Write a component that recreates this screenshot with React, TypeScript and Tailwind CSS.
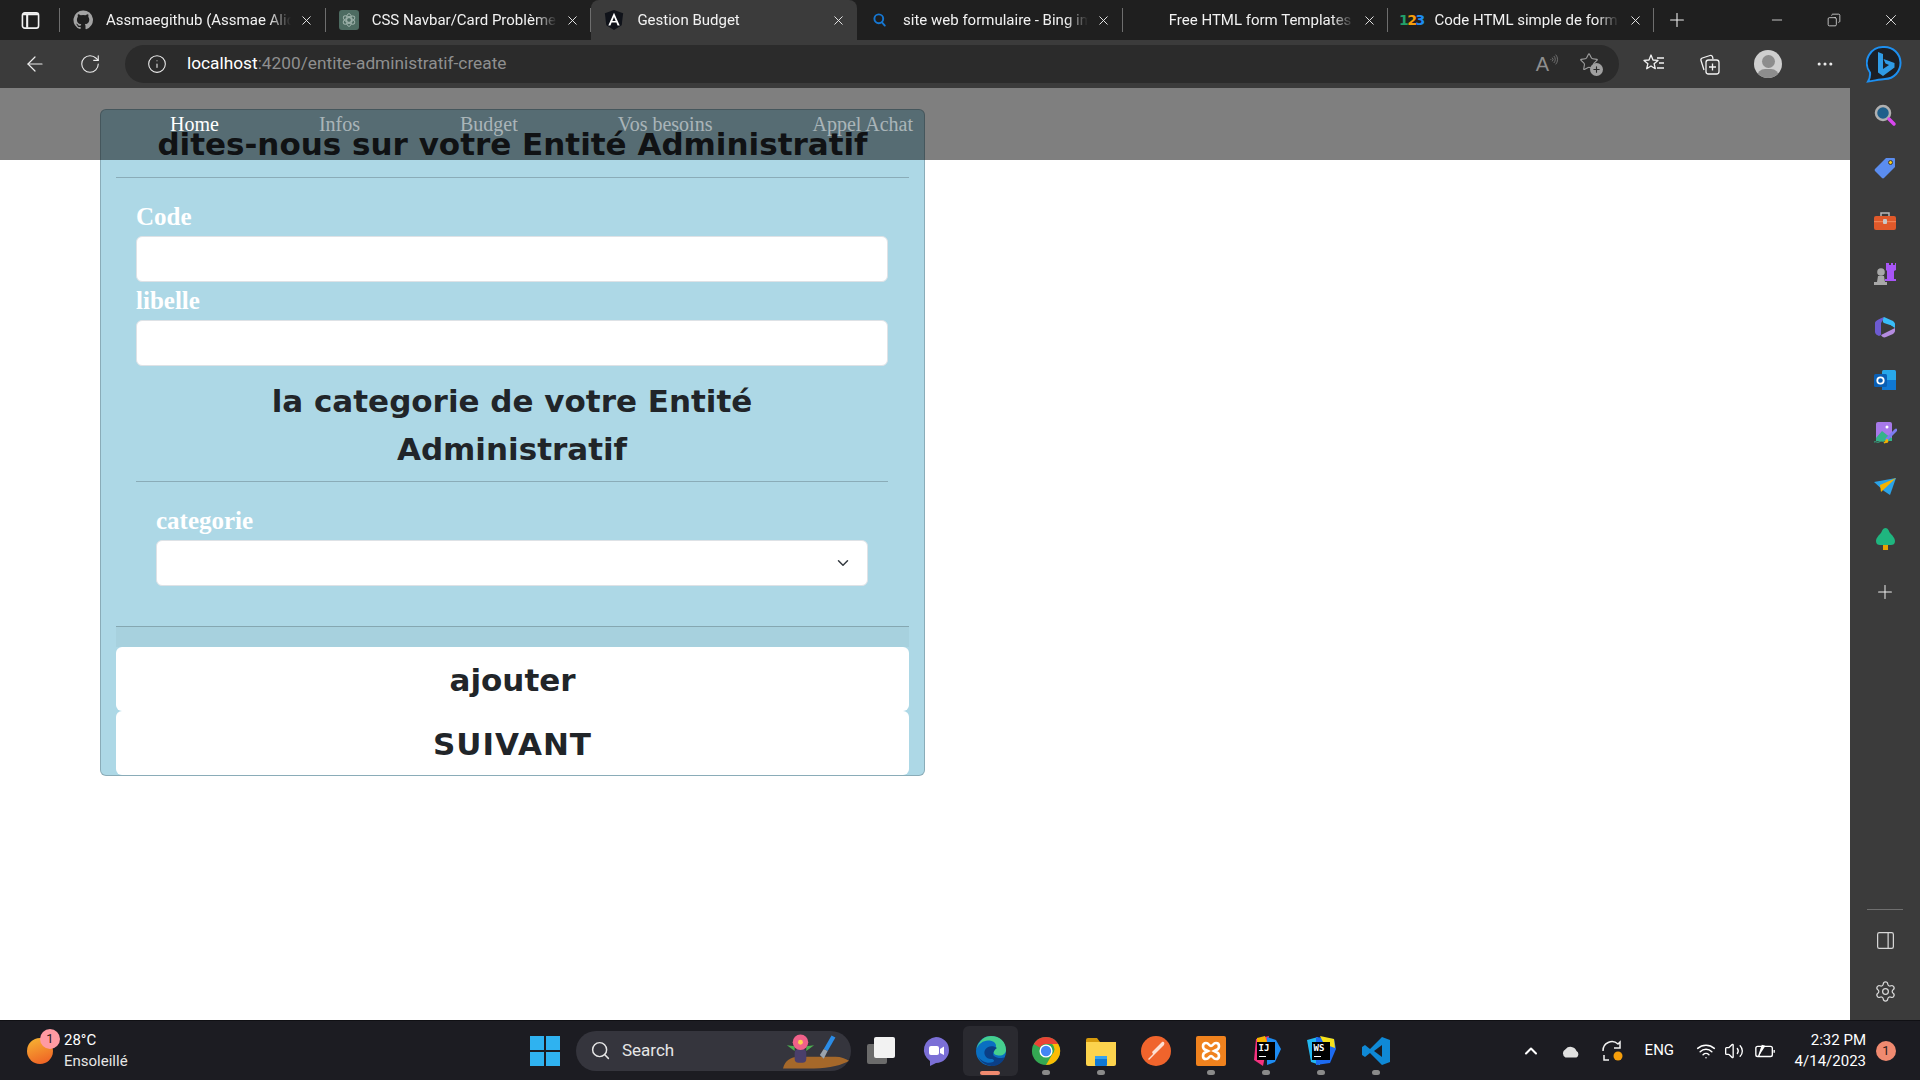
import { ArrowLeft, ChevronDown, ChevronUp, Copy, Info, MoreHorizontal, Minus, PanelRight, Plus, RotateCw, Search, Settings, Star, Volume2, Wifi, X } from "lucide-react";

const tabs = [
  { title: "Assmaegithub (Assmae Alidrissi)", icon: "github" },
  { title: "CSS Navbar/Card Problème", icon: "gpt" },
  { title: "Gestion Budget", icon: "angular", active: true },
  { title: "site web formulaire - Bing images", icon: "bing" },
  { title: "Free HTML form Templates Online", icon: "none" },
  { title: "Code HTML simple de formulaire", icon: "num" },
];

function TabIcon({ kind }: { kind: string }) {
  if (kind === "github") {
    return (
      <svg viewBox="0 0 24 24" className="h-5 w-5" fill="#a3a3a3">
        <path d="M12 .5a11.5 11.5 0 0 0-3.6 22.4c.6.1.8-.3.8-.6v-2c-3.2.7-3.9-1.5-3.9-1.5-.5-1.3-1.3-1.700-1.300-1.700-1-.7.1-.7.1-.7 1.200.1 1.800 1.200 1.800 1.200 1 1.800 2.700 1.300 3.400 1 .1-.8.400-1.300.700-1.600-2.600-.3-5.300-1.300-5.300-5.700 0-1.300.5-2.300 1.200-3.100-.1-.3-.5-1.500.1-3.100 0 0 1-.3 3.200 1.200a11 11 0 0 1 5.800 0c2.200-1.500 3.200-1.200 3.200-1.200.6 1.600.2 2.800.1 3.100.7.8 1.200 1.800 1.200 3.100 0 4.400-2.700 5.400-5.300 5.700.4.400.8 1.100.8 2.200v3.200c0 .3.2.7.8.6A11.500 11.500 0 0 0 12 .5z" />
      </svg>
    );
  }
  if (kind === "gpt") {
    return (
      <span className="flex h-5 w-5 items-center justify-center rounded-[3px] bg-[#4d6b61]">
        <svg viewBox="0 0 20 20" className="h-4 w-4" fill="none" stroke="#9fb3ab" strokeWidth="1.2">
          <circle cx="10" cy="10" r="3" />
          <ellipse cx="10" cy="10" rx="8" ry="3.500" transform="rotate(30 10 10)" />
          <ellipse cx="10" cy="10" rx="8" ry="3.500" transform="rotate(90 10 10)" />
          <ellipse cx="10" cy="10" rx="8" ry="3.500" transform="rotate(150 10 10)" />
        </svg>
      </span>
    );
  }
  if (kind === "angular") {
    return (
      <svg viewBox="0 0 24 24" className="h-[22px] w-[22px]">
        <path d="M12 1 2 4.600l1.600 13.200L12 23l8.400-5.200L22 4.600z" fill="#10131a" />
        <path d="M12 4 5.800 18h2.300l1.300-3.200h5.200l1.300 3.200h2.300L12 4zm1.800 9h-3.600L12 8.600z" fill="#fff" />
      </svg>
    );
  }
  if (kind === "bing") {
    return (
      <svg viewBox="0 0 20 20" className="h-[16px] w-[16px]" fill="none" stroke="#1677d2" strokeWidth="2.400" strokeLinecap="round">
        <circle cx="8.500" cy="8.500" r="5.500" />
        <path d="m12.500 13 3.500 4" />
      </svg>
    );
  }
  if (kind === "num") {
    return (
      <span className="font-['DejaVu_Sans',sans-serif] text-[14px] font-bold tracking-[-1.500px]">
        <span className="text-[#22a06b]">1</span>
        <span className="text-[#f59e0b]">2</span>
        <span className="text-[#1d8bf1]">3</span>
      </span>
    );
  }
  return null;
}

function BrowserTab({ title, icon, active, last }: { title: string; icon: string; active?: boolean; last?: boolean }) {
  return (
    <div className={`relative flex h-10 w-[265.7px] shrink-0 items-center ${active ? "rounded-t-lg bg-[#3b3b3b]" : "bg-[#1f1f1f]"}`}>
      <span className="flex w-[46px] shrink-0 justify-center">
        <TabIcon kind={icon} />
      </span>
      <span className="w-[185px] overflow-hidden whitespace-nowrap text-[15px] text-[#f2f2f2] [mask-image:linear-gradient(to_right,black_88%,transparent)]">
        {title}
      </span>
      <span className="flex flex-1 justify-center pr-[3px]">
        <X className="h-[15px] w-[15px] text-[#ededed]" strokeWidth={1.5} />
      </span>
      {!active && !last && <span className="absolute right-0 top-2 h-6 w-px bg-[#6e6e6e]" />}
      {last && <span className="absolute right-0 top-2 h-6 w-px bg-[#6e6e6e]" />}
    </div>
  );
}

function BrowserChrome() {
  return (
    <div className="h-[88px] shrink-0 bg-[#3b3b3b]">
      <div className="flex h-10 bg-[#1f1f1f]">
        <div className="relative flex w-[60px] shrink-0 items-center pl-[21px]">
          <svg viewBox="0 0 20 20" className="h-[19px] w-[19px]" fill="none" stroke="#f2f2f2" strokeWidth="1.700">
            <rect x="1.500" y="2" width="17" height="16" rx="2.500" />
            <path d="M2 3.500h16M6.500 3v14.500" strokeWidth="2.200" />
          </svg>
          <span className="absolute right-0 top-2 h-6 w-px bg-[#6e6e6e]" />
        </div>
        {tabs.map((t, i) => (
          <BrowserTab key={t.title} title={t.title} icon={t.icon} active={t.active} last={i === tabs.length - 1} />
        ))}
        <div className="flex w-[46px] items-center justify-center">
          <Plus className="h-[22px] w-[22px] text-[#ededed]" strokeWidth={1.2} />
        </div>
        <div className="ml-auto flex items-center">
          <span className="flex w-[57px] justify-center"><Minus className="h-4 w-4 text-[#ededed]" strokeWidth={1.2} /></span>
          <span className="flex w-[57px] justify-center"><Copy className="h-[14px] w-[14px] -scale-x-100 text-[#ededed]" strokeWidth={1.3} /></span>
          <span className="flex w-[58px] justify-center"><X className="h-[18px] w-[18px] text-[#ededed]" strokeWidth={1.2} /></span>
        </div>
      </div>

      <div className="flex h-12 items-center">
        <span className="flex w-[70px] shrink-0 justify-center"><ArrowLeft className="h-[24px] w-[24px] text-[#ececec]" strokeWidth={1.2} /></span>
        <span className="flex w-[40px] shrink-0 justify-center"><RotateCw className="h-[22px] w-[22px] text-[#ececec]" strokeWidth={1.2} /></span>
        <div className="ml-[15px] flex h-[38px] w-[1494px] shrink-0 items-center rounded-full bg-[#2b2b2b]">
          <span className="flex w-[62px] shrink-0 justify-center pl-[2px]"><Info className="h-[20px] w-[20px] text-[#ececec]" strokeWidth={1.3} /></span>
          <span className="text-[17.3px] text-[#8f8f8f]"><span className="text-white">localhost</span>:4200/entite-administratif-create</span>
          <div className="ml-auto flex items-center gap-[19px] pr-[16px]">
            <span className="flex items-start font-['Liberation_Sans',sans-serif] text-[20px] font-light leading-none text-[#8f8f8f]">A<Wifi className="h-[11px] w-[11px] rotate-90" strokeWidth={1.5} /></span>
            <span className="relative block h-6 w-6">
              <Star className="h-[20px] w-[20px] text-[#a0a0a0]" strokeWidth={1.3} />
              <span className="absolute bottom-0 right-0 flex h-[13px] w-[13px] items-center justify-center rounded-full bg-[#a0a0a0]"><Plus className="h-[9px] w-[9px] text-[#2b2b2b]" strokeWidth={3} /></span>
            </span>
          </div>
        </div>
        <span className="ml-[23px] block">
          <svg viewBox="0 0 24 24" className="h-[24px] w-[24px]" fill="none" stroke="#f2f2f2" strokeWidth="1.300" strokeLinejoin="round">
            <path d="m9 3 2 5 5 .4-3.900 3.300 1.200 5L9 14l-4.300 2.700 1.200-5L2 8.400 7 8z" />
            <path d="M15 6h7M17 11h5M15 16h7" />
          </svg>
        </span>
        <span className="ml-[32px] block">
          <svg viewBox="0 0 24 24" className="h-[24px] w-[24px]" fill="none" stroke="#f2f2f2" strokeWidth="1.300">
            <path d="M6 18 3 8.500a2 2 0 0 1 1.300-2.500L12 3.500a2 2 0 0 1 2.500 1.200L15 7" />
            <rect x="8" y="8" width="13" height="14" rx="2.500" />
            <path d="M14.500 11.500v7M11 15h7" />
          </svg>
        </span>
        <span className="relative ml-[32px] block h-[28px] w-[28px] overflow-hidden rounded-full bg-[#cfcfcf]">
          <span className="absolute left-[8px] top-[5px] h-[13px] w-[13px] rounded-full bg-[#8d8d8d]" />
          <span className="absolute left-[3px] top-[19px] h-[16px] w-[22px] rounded-full bg-[#8d8d8d]" />
        </span>
        <span className="ml-[33px] block"><MoreHorizontal className="h-[20px] w-[20px] text-[#ececec]" strokeWidth={1.700} /></span>
        <span className="ml-[31px] block">
          <svg viewBox="0 0 36 38" className="h-[38px] w-[36px]" fill="none">
            <path d="M18 2a16 16 0 0 1 1 32c-5 .2-12 2-17 2.500 1.500-2.500 2.500-5 2-9A16 16 0 0 1 18 2z" stroke="#1d8ff0" strokeWidth="2" fill="#1b1f26" />
            <path d="M12 7l5 2v15l6-4-3.500-1.500-2-4.500 11 4v4.500L17 31l-5-3.500z" fill="#2f9be6" />
          </svg>
        </span>
      </div>
    </div>
  );
}

const navLinks = ["Home", "Infos", "Budget", "Vos besoins", "Appel Achat"];

function Navbar() {
  return (
    <nav className="absolute left-0 right-0 top-0 flex h-[72px] items-start gap-[100px] bg-black/50 pl-[170px] pt-[21px] font-['Liberation_Serif',serif] text-[20px] leading-[30px]">
      {navLinks.map((l, i) => (
        <span key={l} className={i === 0 ? "text-white" : "text-white/50"}>{l}</span>
      ))}
    </nav>
  );
}

const labelCls = "mb-[1px] block pt-[1px] font-['Liberation_Serif',serif] text-[25px] font-bold leading-[36px] text-white";
const fieldCls = "block h-[46px] w-full rounded-md border border-[#dee2e6] bg-white";
const headingCls = "text-center text-[31px] font-bold leading-[48px] text-[#212529]";
const buttonCls = "block h-[64px] w-full rounded-md bg-white pt-[2px] text-center text-[31px] font-bold leading-[48px] text-[#212529]";

function FormCard() {
  return (
    <div className="ml-[100px] mt-[21px] w-[825px] rounded-md border border-black/20 bg-[#add8e6] font-['DejaVu_Sans',sans-serif]">
      <div className="mx-[15px] border-b border-black/20 pb-[9px] pt-[10px]">
        <h1 className={headingCls}>dites-nous sur votre Entité Administratif</h1>
      </div>

      <div className="pl-[35px] pr-[36px] pt-[20px]">
        <label className={labelCls}>Code</label>
        <input className={fieldCls} />
        <label className={labelCls}>libelle</label>
        <input className={fieldCls} />

        <div className="border-b border-black/20 px-[80px] pb-[8px] pt-[11px]">
          <h2 className={headingCls}>la categorie de votre Entité Administratif</h2>
        </div>

        <div className="px-[20px] pb-[40px] pt-[20px]">
          <label className={labelCls}>categorie</label>
          <div className="relative">
            <select className={`${fieldCls} appearance-none`} />
            <ChevronDown className="absolute right-[16px] top-[14px] h-[18px] w-[18px] text-[#343a40]" strokeWidth={2} />
          </div>
        </div>
      </div>

      <div className="mx-[15px]">
        <div className="h-[21px] border-t border-black/20 bg-black/[0.03]" />
        <button className={buttonCls}>ajouter</button>
        <button className={`${buttonCls} tracking-[1px]`}>SUIVANT</button>
      </div>
    </div>
  );
}

function SideIcon({ kind }: { kind: string }) {
  switch (kind) {
    case "search":
      return (
        <svg viewBox="0 0 24 24" className="h-[24px] w-[24px]" fill="none">
          <circle cx="10" cy="10" r="7" fill="#1f5f8b" stroke="#b0b0b0" strokeWidth="2.500" />
          <path d="m16 16 5 5" stroke="#d946ef" strokeWidth="3.500" strokeLinecap="round" />
        </svg>
      );
    case "tag":
      return (
        <svg viewBox="0 0 24 24" className="h-[24px] w-[24px]">
          <path d="M13 2h8a1 1 0 0 1 1 1v8L11 22a1.500 1.500 0 0 1-2 0l-7-7a1.500 1.500 0 0 1 0-2z" fill="#5b8def" />
          <circle cx="17.500" cy="6.500" r="2" fill="#facc15" stroke="#3a3a3a" />
        </svg>
      );
    case "tool":
      return (
        <svg viewBox="0 0 24 24" className="h-[24px] w-[24px]">
          <path d="M8 7V4h8v3" fill="none" stroke="#b8b8b8" strokeWidth="1.500" />
          <rect x="1" y="7" width="22" height="14" rx="2" fill="#e0592a" />
          <rect x="1" y="12" width="22" height="1.200" fill="#f08355" />
          <rect x="10" y="10" width="4" height="5" rx="1" fill="#c9c9c9" />
        </svg>
      );
    case "chess":
      return (
        <svg viewBox="0 0 24 24" className="h-[24px] w-[24px]">
          <path d="M13 1h3v2h2V1h2v2h2V1h1v7l-2 1v8h2v2H12v-2h2V9l-1-1z" fill="#a855f7" />
          <circle cx="8" cy="10" r="3.800" fill="#a8a8a8" />
          <path d="M5 14h6l1 6h2v3H1v-3h3z" fill="#a8a8a8" />
        </svg>
      );
    case "m365":
      return (
        <svg viewBox="0 0 24 24" className="h-[24px] w-[24px]">
          <path d="M11 2c-5 2-9 4-9 6v9c0 2 2 3 4 4l2-1V9c0-2 2-3 3-7z" fill="#6d5bd0" />
          <path d="M11 2 20 6c1 1 2 2 2 3v4l-5-3-6-2c-2-1-1-5 0-6z" fill="#38bdf8" />
          <path d="M8 20l12-6 2-1v3c0 1-1 2-2 3l-7 3c-2 1-4 0-5-2z" fill="#b48ce0" />
          <path d="M11 13l6-3 3 2-9 5z" fill="#3a3a3a" />
        </svg>
      );
    case "outlook":
      return (
        <svg viewBox="0 0 24 24" className="h-[24px] w-[24px]">
          <rect x="9" y="2" width="14" height="20" rx="1.500" fill="#28a8ea" />
          <path d="M9 12h14v10H9z" fill="#0f78d4" />
          <rect x="1" y="6" width="13" height="13" rx="1.500" fill="#0a5fb4" />
          <circle cx="7.500" cy="12.500" r="3.200" fill="none" stroke="#fff" strokeWidth="1.800" />
        </svg>
      );
    case "image":
      return (
        <svg viewBox="0 0 24 24" className="h-[24px] w-[24px]">
          <rect x="3" y="1" width="16" height="19" rx="2" fill="#a779e9" />
          <circle cx="14" cy="6" r="1.500" fill="#fff" />
          <path d="M3 17l6-7 5 4 5 3v3H3z" fill="#34b38a" />
          <path d="M23 9 14 18" stroke="#7c7cf0" strokeWidth="3" strokeLinecap="round" />
          <path d="M14 18l-3 4 4-1z" fill="#f5b301" stroke="#f5b301" />
          <path d="M1 21c2-1 3 1 5 0s3-1 5 0" fill="none" stroke="#34b38a" strokeWidth="1" />
        </svg>
      );
    case "send":
      return (
        <svg viewBox="0 0 24 24" className="h-[24px] w-[24px]">
          <path d="M1 8 23 4 17 21l-6-4z" fill="#2ba3e8" />
          <path d="M23 4 7 11l1 7z" fill="#f5b301" />
        </svg>
      );
    case "tree":
      return (
        <svg viewBox="0 0 24 24" className="h-[24px] w-[24px]">
          <rect x="10" y="17" width="5" height="6" fill="#e6a100" />
          <path d="M12.500 1c2.500 0 3.500 3 4.500 5 2 2 5 5 5 8 0 3-2 4-4 4H7c-2 0-4-1-4-4 0-3 3-6 5-8 1-2 2-5 4.500-5z" fill="#1fb57f" />
        </svg>
      );
    default:
      return <Plus className="h-[22px] w-[22px] text-[#ededed]" strokeWidth={1.1} />;
  }
}

const sideIcons = ["search", "tag", "tool", "chess", "m365", "outlook", "image", "send", "tree", "plus"];

function Sidebar() {
  return (
    <aside className="flex w-[70px] shrink-0 flex-col items-center bg-[#3b3b3b]">
      {sideIcons.map((k) => (
        <div key={k} className="flex h-[53px] w-full items-center justify-center">
          <SideIcon kind={k} />
        </div>
      ))}
      <div className="mt-auto h-px w-[36px] bg-[#6f6f6f]" />
      <div className="flex h-[60px] items-center justify-center">
        <PanelRight className="h-[21px] w-[21px] text-[#d8d8d8]" strokeWidth={1.4} />
      </div>
      <div className="flex h-[50px] items-start justify-center pt-[10px]">
        <Settings className="h-[23px] w-[23px] text-[#d8d8d8]" strokeWidth={1.3} />
      </div>
    </aside>
  );
}

function TaskIcon({ kind }: { kind: string }) {
  switch (kind) {
    case "task":
      return (
        <svg viewBox="0 0 30 30" className="h-[30px] w-[30px]">
          <rect x="1" y="8" width="20" height="20" rx="2" fill="#6b6b6b" />
          <rect x="8" y="1" width="21" height="21" rx="2" fill="#f2f2f2" />
        </svg>
      );
    case "meet":
      return (
        <svg viewBox="0 0 30 30" className="h-[30px] w-[30px]">
          <path d="M15 1a13 13 0 0 1 13 13 13 13 0 0 1-13 13l-6 3v-5A13 13 0 0 1 15 1z" fill="#7b6fd6" />
          <rect x="8" y="10" width="10" height="9" rx="2" fill="#fff" />
          <path d="m19 13 4-2.500v8.500L19 17z" fill="#fff" />
        </svg>
      );
    case "edge":
      return (
        <svg viewBox="0 0 32 32" className="h-[32px] w-[32px]">
          <circle cx="16" cy="16" r="15" fill="#0a6fc2" />
          <path d="M1.500 14C3.500 5.500 10 1 16 1c9 0 15 6 15 14 0 3.500-3 5.500-6.500 5.500-3 0-6-1-6-3.500 0-2.500 2.500-3 2.500-6 0-4-4-5.500-8-5.500-5 0-9.500 3.500-11.500 8.500z" fill="#45cf8e" />
          <path d="M22 13c-4-3-10-2-12 2s1 9 6 9c3 0 4 2 2 3-5 2-12 0-15-6 3 8 11 10 15 10s10-3 12-9c-3 2-9 1-11-1s0-6 3-8z" fill="#0b3f86" />
        </svg>
      );
    case "chrome":
      return (
        <svg viewBox="0 0 32 32" className="h-[30px] w-[30px]">
          <circle cx="16" cy="16" r="15" fill="#34a853" />
          <path d="M16 1a15 15 0 0 1 13 7.500H16a7.500 7.500 0 0 0-6.500 3.800L3 8.500A15 15 0 0 1 16 1z" fill="#ea4335" />
          <path d="M29 8.500A15 15 0 0 1 16 31l6.500-11.200a7.500 7.500 0 0 0 0-11.300z" fill="#fbbc04" />
          <circle cx="16" cy="16" r="7" fill="#fff" />
          <circle cx="16" cy="16" r="5.500" fill="#4285f4" />
        </svg>
      );
    case "folder":
      return (
        <svg viewBox="0 0 32 32" className="h-[32px] w-[32px]">
          <path d="M1 5a2 2 0 0 1 2-2h9l3 4h-14z" fill="#d69a0c" />
          <path d="M1 7h30v22a2 2 0 0 1-2 2H3a2 2 0 0 1-2-2z" fill="#fcd34d" />
          <rect x="10" y="21" width="12" height="10" rx="1" fill="#0f78d4" />
          <rect x="10" y="21" width="12" height="3" fill="#36a3ef" />
        </svg>
      );
    case "pen":
      return (
        <svg viewBox="0 0 30 30" className="h-[30px] w-[30px]">
          <circle cx="15" cy="15" r="15" fill="#f0642c" />
          <path d="M21 6c2-1 3 1 2 3l-2 2-8 8-5 5-1-1 5-5-1-2z" fill="#fde0d2" />
        </svg>
      );
    case "xampp":
      return (
        <svg viewBox="0 0 30 30" className="h-[30px] w-[30px]">
          <rect width="30" height="30" rx="2" fill="#f0821e" />
          <path d="M10 7c-4 0-4 6 0 7l2 1-2 1c-4 1-4 7 0 7 3 0 3-3 5-3s2 3 5 3c4 0 4-6 0-7l-2-1 2-1c4-1 4-7 0-7-3 0-3 3-5 3s-2-3-5-3z" fill="none" stroke="#fff" strokeWidth="2.600" />
        </svg>
      );
    case "ij":
    case "ws":
      return (
        <span className="relative block h-[30px] w-[30px]">
          <svg viewBox="0 0 30 30" className="absolute inset-0 h-[30px] w-[30px]">
            {kind === "ij" ? (
              <>
                <path d="M5 3 18 0l-6 30-9-6z" fill="#f5317f" />
                <path d="M16 1l9 3 5 9-6 13-8 3z" fill="#1d8bf1" />
                <path d="M6 2 14 0l2 6H6z" fill="#f5b301" />
              </>
            ) : (
              <>
                <path d="M1 4 12 1l2 28-9-3z" fill="#22b8f0" />
                <path d="M10 1l18 2 2 10-6 14-14 2z" fill="#1d6bf1" />
                <path d="M14 0l14 3 1 9-11-4z" fill="#f5e11b" />
              </>
            )}
          </svg>
          <span className="absolute inset-[6px] bg-black font-['DejaVu_Sans_Mono',monospace] text-[9px] font-bold leading-[10px] text-white">
            <span className="block pl-[2px] pt-[1px]">{kind === "ij" ? "IJ" : "WS"}</span>
            <span className="ml-[2px] mt-[3px] block h-[1px] w-[7px] bg-white" />
          </span>
        </span>
      );
    default:
      return (
        <svg viewBox="0 0 30 30" className="h-[30px] w-[30px]">
          <path d="M21 1 9 13 4 9 1 11v8l3 2 5-4 12 12 8-3V4z" fill="#0f89d6" />
          <path d="M21 9v12l-8-6z" fill="#1c1c22" />
        </svg>
      );
  }
}

const taskApps = [
  { kind: "task" },
  { kind: "meet" },
  { kind: "edge", active: true },
  { kind: "chrome", dot: true },
  { kind: "folder", dot: true },
  { kind: "pen" },
  { kind: "xampp", dot: true },
  { kind: "ij", dot: true },
  { kind: "ws", dot: true },
  { kind: "vscode", dot: true },
];

function Taskbar() {
  return (
    <footer className="flex h-[60px] shrink-0 items-center border-t border-[#101014] bg-[#1c1c22] text-white">
      <div className="flex w-[530px] shrink-0 items-center pl-[27px]">
        <span className="relative block h-[26px] w-[26px] rounded-full bg-[linear-gradient(160deg,#f7b733,#ee5a24)]">
          <span className="absolute -right-[7px] -top-[9px] flex h-[20px] w-[20px] items-center justify-center rounded-full bg-[#ff9aa2] text-[13px] text-[#2b1a1a]">1</span>
        </span>
        <div className="ml-[11px] text-[15px] leading-[21px]">
          <div>28°C</div>
          <div className="text-[#e6e6e6]">Ensoleillé</div>
        </div>
      </div>

      <svg viewBox="0 0 30 30" className="h-[30px] w-[30px] shrink-0">
        <path d="M0 0h14v14H0zM16 0h14v14H16zM0 16h14v14H0zM16 16h14v14H16z" fill="#2fb2f0" />
      </svg>

      <div className="ml-[16px] flex h-[40px] w-[275px] shrink-0 items-center rounded-full bg-[#35353d] pl-[14px]">
        <Search className="h-[21px] w-[21px] text-[#e6e6e6]" strokeWidth={1.700} />
        <span className="ml-[11px] text-[17px] text-[#e6e6e6]">Search</span>
        <svg viewBox="0 0 68 36" className="ml-auto h-[36px] w-[68px] pr-[2px]">
          <path d="M0 36c2-8 8-12 16-12h38c6 0 10 2 14 4-6 4-20 8-36 8z" fill="#a5682a" />
          <rect x="12" y="16" width="12" height="14" rx="4" fill="#4a3f6b" />
          <path d="M12 18 4 12l8 1zM24 18l8-6-8 1z" fill="#4caf50" />
          <circle cx="18" cy="9" r="8" fill="#f0618a" />
          <circle cx="18" cy="9" r="2.500" fill="#fcd34d" />
          <path d="m50 2 4 2-8 14-4-2z" fill="#2b8ce6" />
          <path d="M42 16l4 2-4 8-4-4z" fill="#9aa3ad" />
        </svg>
      </div>

      <div className="ml-[2px] flex shrink-0 items-center">
        {taskApps.map((a) => (
          <div key={a.kind} className={`relative flex h-[50px] w-[55px] items-center justify-center rounded-md ${a.active ? "bg-[#2a2a30]" : ""}`}>
            <TaskIcon kind={a.kind} />
            {a.dot && <span className="absolute bottom-[1px] left-[24px] h-[5px] w-[8px] rounded-full bg-[#8a8a8a]" />}
            {a.active && <span className="absolute bottom-[1px] left-[17px] h-[4px] w-[20px] rounded-full bg-[#f08a70]" />}
          </div>
        ))}
      </div>

      <div className="ml-auto flex items-center pr-[24px]">
        <ChevronUp className="h-[20px] w-[20px]" strokeWidth={2.500} />
        <svg viewBox="0 0 24 16" className="ml-[19px] h-[16px] w-[22px]">
          <path d="M6 15a5 5 0 0 1 0-9 7 7 0 0 1 12 2 4 4 0 0 1 0 7z" fill="#e0e0e0" />
        </svg>
        <svg viewBox="0 0 24 24" className="ml-[18px] h-[24px] w-[24px]" fill="none" stroke="#f2f2f2" strokeWidth="1.500">
          <path d="M3 12A9 9 0 0 1 18 5l2-2v6h-6" />
          <path d="M9 21H4v-5" />
          <circle cx="18" cy="17" r="4.500" fill="#f59e0b" stroke="none" />
        </svg>
        <span className="ml-[21px] w-[30px] text-[15px]">ENG</span>
        <Wifi className="ml-[21px] h-[20px] w-[20px]" strokeWidth={1.800} />
        <Volume2 className="ml-[8px] h-[20px] w-[20px]" strokeWidth={1.600} />
        <svg viewBox="0 0 24 16" className="ml-[10px] h-[16px] w-[22px]" fill="none" stroke="#fff" strokeWidth="1.500">
          <rect x="2" y="3" width="18" height="11" rx="2" />
          <path d="M22 7v3" />
          <path d="M5 14 9 2l3 1" fill="#fff" />
        </svg>
        <div className="ml-[19px] text-right text-[15px] leading-[21px]">
          <div>2:32 PM</div>
          <div>4/14/2023</div>
        </div>
        <span className="ml-[10px] flex h-[20px] w-[20px] items-center justify-center rounded-full bg-[#f08a70] text-[13px] text-[#2b1a1a]">1</span>
      </div>
    </footer>
  );
}

export default function App() {
  return (
    <div className="flex h-screen w-[1920px] flex-col overflow-hidden bg-white font-['Roboto',sans-serif]">
      <BrowserChrome />
      <div className="flex min-h-0 flex-1">
        <main className="relative flex-1 overflow-hidden bg-white">
          <FormCard />
          <Navbar />
        </main>
        <Sidebar />
      </div>
      <Taskbar />
    </div>
  );
}
